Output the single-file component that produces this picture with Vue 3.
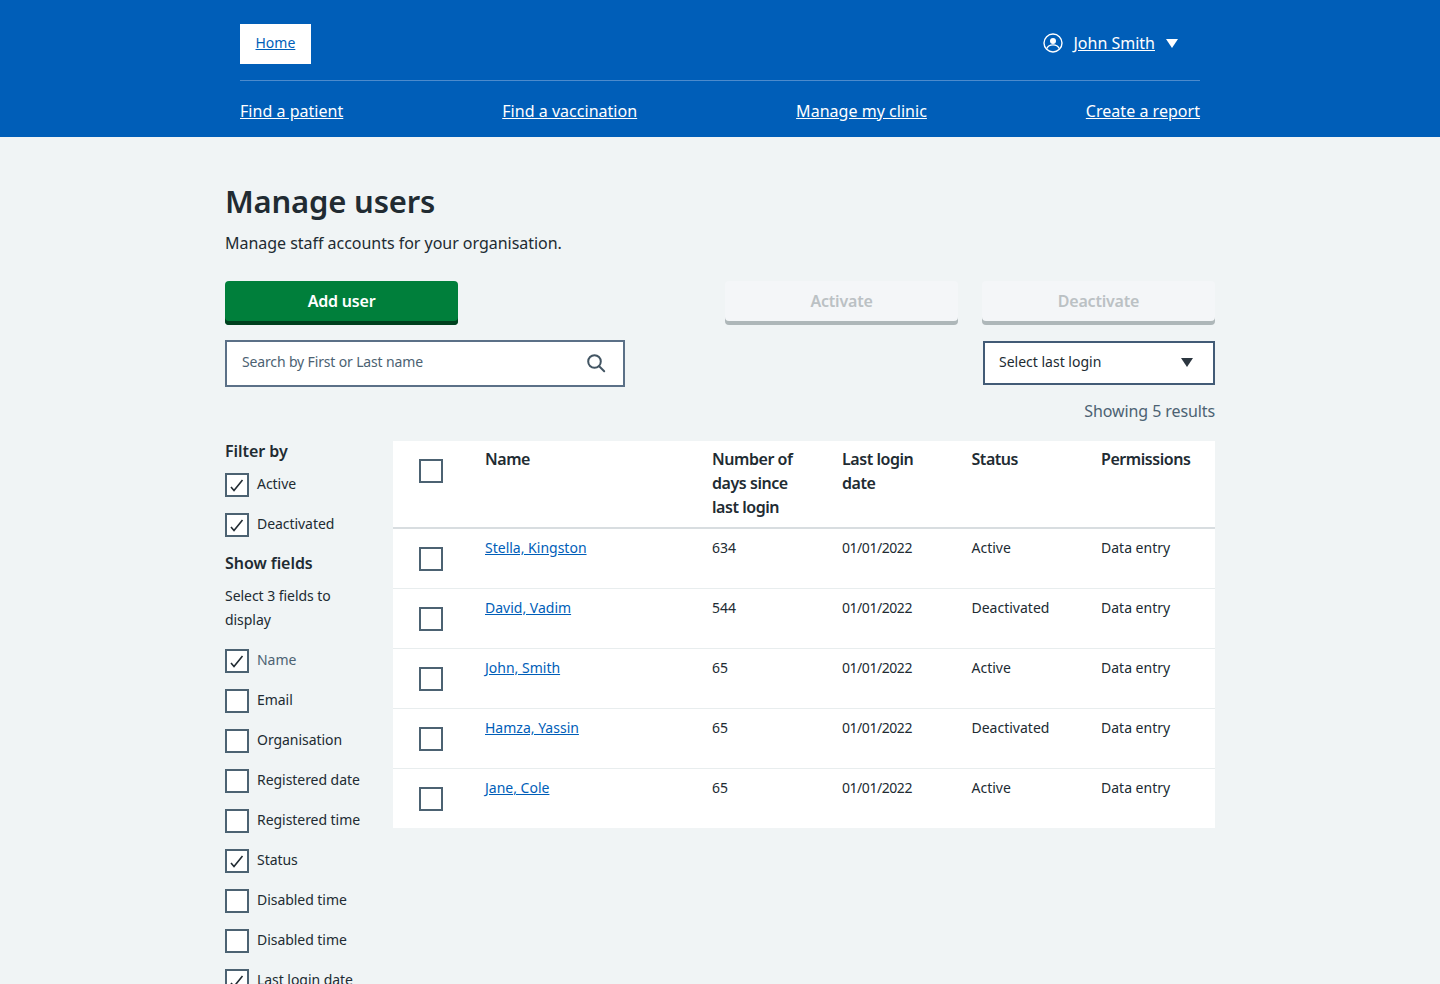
<template>
  <div class="page">
    <header class="header">
      <div class="header-inner">
        <div class="top-row">
          <a class="home-link" href="#">Home</a>
          <div class="account">
            <svg class="account-icon" width="20" height="20" viewBox="0 0 20 20" fill="none" stroke="#fff" stroke-width="1.4">
              <circle cx="10" cy="10" r="9" />
              <circle cx="10" cy="8" r="3" fill="#fff" stroke="none" />
              <path d="M3.9 15.6c1-2.6 3.2-3.7 6.1-3.7s5.100 1.100 6.100 3.700" />
            </svg>
            <a class="account-link" href="#">John Smith</a>
            <span class="account-caret"></span>
          </div>
        </div>
        <nav class="nav">
          <a v-for="item in navItems" :key="item" href="#">{{ item }}</a>
        </nav>
      </div>
    </header>

    <main class="main">
      <h1>Manage users</h1>
      <p class="intro">Manage staff accounts for your organisation.</p>

      <div class="actions">
        <button class="btn btn-primary">Add user</button>
        <div class="actions-right">
          <button class="btn btn-disabled">Activate</button>
          <button class="btn btn-disabled">Deactivate</button>
        </div>
      </div>

      <div class="search-row">
        <div class="search">
          <span class="field-text">Search by First or Last name</span>
          <svg width="20" height="20" viewBox="0 0 20 20" fill="none" stroke="#425563" stroke-width="2" stroke-linecap="round">
            <circle cx="8.500" cy="8.500" r="6.300" />
            <path d="M13.200 13.200l5 5" />
          </svg>
        </div>
        <div class="select">
          <span class="field-text">Select last login</span>
          <span class="select-caret"></span>
        </div>
      </div>

      <p class="results">Showing 5 results</p>

      <div class="content">
        <aside class="sidebar">
          <h2 class="filter-title">Filter by</h2>
          <label v-for="f in filters" :key="f" class="check-row">
            <span class="box">
              <svg width="16" height="16" viewBox="0 0 16 16" fill="none" stroke="#212b32" stroke-width="1.600"><path d="M2 10l3 3.500L13.500 3" /></svg>
            </span>
            <span>{{ f }}</span>
          </label>
          <h2 class="fields-title">Show fields</h2>
          <p class="fields-hint">Select 3 fields to display</p>
          <label v-for="f in fields" :key="f.id" class="check-row" :class="{ muted: f.muted }">
            <span class="box">
              <svg v-if="f.on" width="16" height="16" viewBox="0 0 16 16" fill="none" stroke="#212b32" stroke-width="1.600"><path d="M2 10l3 3.500L13.500 3" /></svg>
            </span>
            <span>{{ f.label }}</span>
          </label>
        </aside>

        <div class="table-wrap">
          <table>
            <thead>
              <tr>
                <th class="col-check"><span class="box"></span></th>
                <th class="col-name">Name</th>
                <th class="col-days">Number of days since last login</th>
                <th class="col-date">Last login date</th>
                <th class="col-status">Status</th>
                <th>Permissions</th>
              </tr>
            </thead>
            <tbody>
              <tr v-for="u in users" :key="u.name">
                <td class="col-check"><span class="box"></span></td>
                <td><a href="#">{{ u.name }}</a></td>
                <td>{{ u.days }}</td>
                <td class="date">01/01/2022</td>
                <td>{{ u.status }}</td>
                <td>Data entry</td>
              </tr>
            </tbody>
          </table>
        </div>
      </div>
    </main>
  </div>
</template>

<script setup>
const navItems = ['Find a patient', 'Find a vaccination', 'Manage my clinic', 'Create a report']

const filters = ['Active', 'Deactivated']

const fields = [
  { id: 1, label: 'Name', on: true, muted: true },
  { id: 2, label: 'Email' },
  { id: 3, label: 'Organisation' },
  { id: 4, label: 'Registered date' },
  { id: 5, label: 'Registered time' },
  { id: 6, label: 'Status', on: true },
  { id: 7, label: 'Disabled time' },
  { id: 8, label: 'Disabled time' },
  { id: 9, label: 'Last login date', on: true }
]

const users = [
  { name: 'Stella, Kingston', days: 634, status: 'Active' },
  { name: 'David, Vadim', days: 544, status: 'Deactivated' },
  { name: 'John, Smith', days: 65, status: 'Active' },
  { name: 'Hamza, Yassin', days: 65, status: 'Deactivated' },
  { name: 'Jane, Cole', days: 65, status: 'Active' }
]
</script>

<style>
html, body {
  margin: 0;
  background: #f0f4f5;
}
</style>

<style scoped>
.page {
  height: 984px;
  overflow: hidden;
  background: #f0f4f5;
  color: #212b32;
  font-family: "Noto Sans", "Open Sans", sans-serif;
}

.header {
  background: #005eb8;
  height: 137px;
}

.header-inner {
  width: 960px;
  margin: 0 auto;
  padding-top: 24px;
}

.top-row {
  display: flex;
  justify-content: space-between;
  align-items: center;
  height: 40px;
  padding-bottom: 16px;
  border-bottom: 1px solid #4c8bcd;
}

.home-link {
  background: #fff;
  color: #005eb8;
  font-size: 14px;
  line-height: 38px;
  padding: 0 15.500px 2px;
}

.account {
  display: flex;
  align-items: center;
  padding: 0 22px 2px 0;
}

.account-icon {
  margin-right: 10px;
}

.account-link {
  color: #fff;
  font-size: 16px;
}

.account-caret {
  width: 0;
  height: 0;
  margin-left: 11px;
  border-left: 6.500px solid transparent;
  border-right: 6.500px solid transparent;
  border-top: 9px solid #fff;
}

.nav {
  display: flex;
  justify-content: space-between;
  padding-top: 19px;
  letter-spacing: 0.03px;
}

.nav a {
  color: #fff;
  font-size: 16px;
  line-height: 22px;
}

.main {
  width: 990px;
  margin: 0 auto;
  padding-top: 45px;
}

h1 {
  margin: 0;
  font-size: 31px;
  line-height: 38px;
  font-weight: 600;
  letter-spacing: -0.2px;
}

.intro {
  margin: 11px 0 0;
  font-size: 16px;
  line-height: 24px;
  letter-spacing: -0.03px;
}

.actions {
  display: flex;
  justify-content: space-between;
  margin-top: 26px;
}

.actions-right {
  display: flex;
  gap: 24px;
}

.btn {
  width: 233px;
  height: 44px;
  border: 0;
  border-radius: 4px;
  font: 600 16px/40px "Noto Sans", "Open Sans", sans-serif;
  letter-spacing: -0.2px;
  padding: 0 0 4px;
}

.btn-primary {
  background: #007f3b;
  color: #fff;
  box-shadow: inset 0 -4px 0 #00401e;
}

.btn-disabled {
  background: #f4f6f8;
  color: #bbc1c4;
  box-shadow: inset 0 -4px 0 #aeb7b9;
}

.search-row {
  display: flex;
  justify-content: space-between;
  align-items: flex-start;
  margin-top: 15px;
}

.search {
  width: 400px;
  height: 47px;
  box-sizing: border-box;
  display: flex;
  justify-content: space-between;
  align-items: center;
  padding: 0 17px 2px 15px;
  background: #fff;
  border: 2px solid #5b7087;
  color: #4c6272;
  font-size: 14px;
  letter-spacing: -0.15px;
}

.select {
  width: 232px;
  height: 44px;
  margin-top: 1px;
  box-sizing: border-box;
  display: flex;
  justify-content: space-between;
  align-items: center;
  padding: 0 20px 2px 14px;
  background: #fff;
  border: 2px solid #425b76;
  font-size: 14px;
}

.field-text {
  padding-bottom: 2px;
}

.select-caret {
  width: 0;
  height: 0;
  border-left: 6.500px solid transparent;
  border-right: 6.500px solid transparent;
  border-top: 9px solid #2c3640;
}

.results {
  margin: 12px 0 0;
  text-align: right;
  color: #4c6272;
  font-size: 16px;
  line-height: 24px;
  letter-spacing: -0.1px;
}

.content {
  display: flex;
  margin-top: 18px;
}

.sidebar {
  width: 168px;
  flex: none;
  font-size: 14px;
  letter-spacing: -0.05px;
}

.filter-title,
.fields-title {
  margin: 0;
  font-size: 16px;
  font-weight: 600;
  line-height: 24px;
}

.filter-title {
  margin: -2px 0 10px;
}

.fields-title {
  margin-top: -2px;
}

.fields-hint {
  margin: 9px 0 17px;
  line-height: 24px;
  width: 130px;
}

.check-row {
  display: flex;
  align-items: flex-start;
  gap: 8px;
  height: 40px;
  line-height: 22px;
}

.check-row.muted {
  color: #4c6272;
}

.box {
  width: 24px;
  height: 24px;
  box-sizing: border-box;
  flex: none;
  display: flex;
  align-items: center;
  justify-content: center;
  background: #fff;
  border: 2px solid #4c6272;
}

.table-wrap {
  flex: 1;
}

table {
  width: 100%;
  border-collapse: collapse;
  table-layout: fixed;
  background: #fff;
  font-size: 14px;
}

th,
td {
  box-sizing: border-box;
}

th {
  text-align: left;
  vertical-align: top;
  font-size: 16px;
  font-weight: 600;
  line-height: 24px;
  letter-spacing: -0.45px;
  padding: 6px 20px 8px 0;
  border-bottom: 2px solid #d8dde0;
}

th.col-days,
th.col-date {
  padding-right: 35px;
}

td {
  vertical-align: top;
  height: 60px;
  padding: 8px 10px 0 0;
  line-height: 22px;
  border-bottom: 1px solid #e8edee;
}

tbody tr:last-child td {
  border-bottom: 0;
}

td a {
  color: #005eb8;
}

td.date {
  letter-spacing: -0.45px;
}

th.col-check,
td.col-check {
  width: 92px;
  padding: 18px 0 0 26px;
}

.col-name {
  width: 227px;
}

.col-days {
  width: 130px;
}

.col-date,
.col-status {
  width: 129.500px;
}
</style>
